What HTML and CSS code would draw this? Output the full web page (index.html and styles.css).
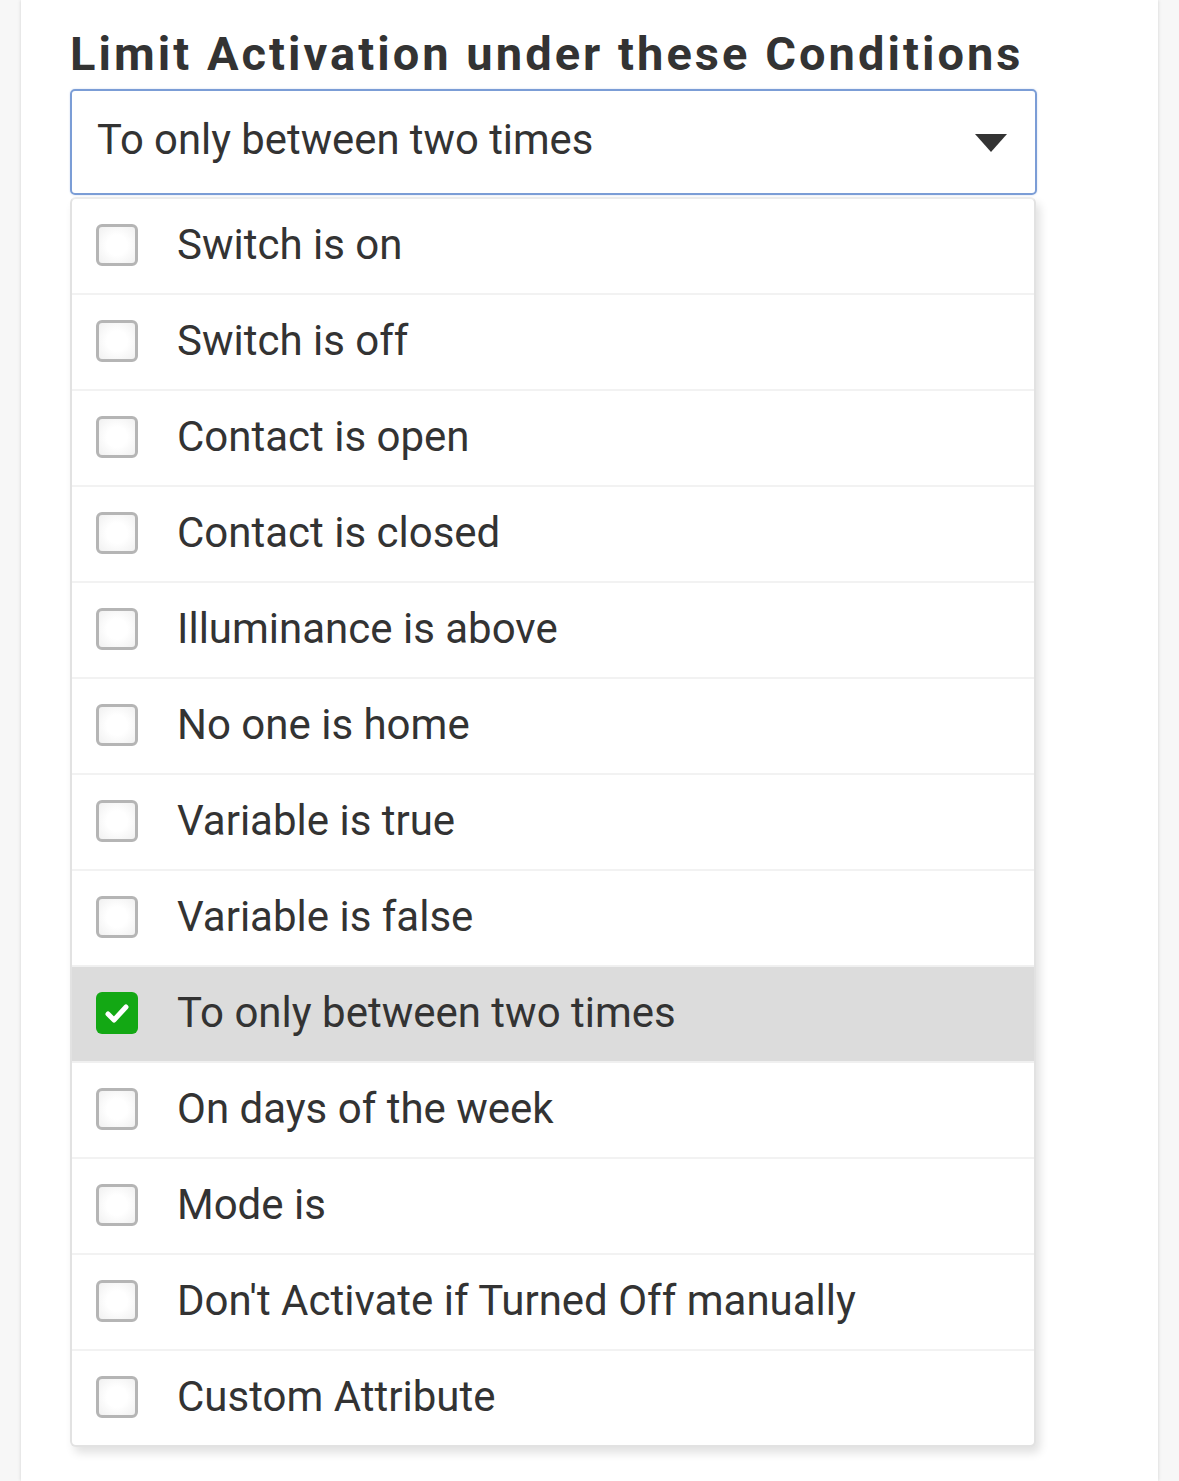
FILE: index.html
```html
<!DOCTYPE html>
<html>
<head>
<meta charset="utf-8">
<link rel="stylesheet" href="styles.css">
</head>
<body>
<div class="page">
  <div class="card">
    <h2 class="title">Limit Activation under these Conditions</h2>
    <div class="select">
      <span class="select-text">To only between two times</span>
      <span class="arrow"></span>
    </div>
    <ul class="menu">
      <li class="item"><span class="box"></span><span class="label">Switch is on</span></li>
      <li class="item"><span class="box"></span><span class="label">Switch is off</span></li>
      <li class="item"><span class="box"></span><span class="label">Contact is open</span></li>
      <li class="item"><span class="box"></span><span class="label">Contact is closed</span></li>
      <li class="item"><span class="box"></span><span class="label">Illuminance is above</span></li>
      <li class="item"><span class="box"></span><span class="label">No one is home</span></li>
      <li class="item"><span class="box"></span><span class="label">Variable is true</span></li>
      <li class="item"><span class="box"></span><span class="label">Variable is false</span></li>
      <li class="item selected"><span class="box checked"><svg viewBox="0 0 42 42" width="42" height="42"><path d="M12 22 L18 28 L30 15" fill="none" stroke="#fff" stroke-width="5" stroke-linecap="round" stroke-linejoin="round"/></svg></span><span class="label">To only between two times</span></li>
      <li class="item"><span class="box"></span><span class="label">On days of the week</span></li>
      <li class="item"><span class="box"></span><span class="label">Mode is</span></li>
      <li class="item"><span class="box"></span><span class="label">Don't Activate if Turned Off manually</span></li>
      <li class="item"><span class="box"></span><span class="label">Custom Attribute</span></li>
    </ul>
  </div>
</div>
</body>
</html>
```
FILE: styles.css
```css
html, body {
  margin: 0;
  padding: 0;
  background: #f7f7f7;
  font-family: Roboto, "Liberation Sans", sans-serif;
  color: #333;
}
.page {
  display: flex;
  min-height: 1481px;
}
.card {
  margin-left: 21px;
  width: 1137px;
  background: #fff;
  box-shadow: -1px 0 3px rgba(0,0,0,0.08), 1px 0 3px rgba(0,0,0,0.08);
  padding: 26px 0 0 49px;
  box-sizing: border-box;
}
.title {
  margin: 0;
  font-size: 47px;
  font-weight: 700;
  letter-spacing: 3.05px;
  line-height: 56px;
  color: #333;
}
.select {
  margin-top: 7px;
  width: 967px;
  height: 106px;
  box-sizing: border-box;
  border: 2px solid #7b9dd6;
  border-radius: 5px;
  display: flex;
  align-items: center;
  padding: 0 28px 0 25px;
  box-shadow: 0 0 2px rgba(123,157,214,0.4);
}
.select-text {
  flex: 1;
  font-size: 41.8px;
  color: #333;
  margin-top: -6px;
}
.arrow {
  width: 0;
  height: 0;
  border-left: 16px solid transparent;
  border-right: 16px solid transparent;
  border-top: 18px solid #333;
  margin-top: 2px;
}
.menu {
  list-style: none;
  margin: 2px 0 0 0;
  padding: 0;
  width: 966px;
  box-sizing: border-box;
  border: 2px solid #e2e2e2;
  border-top-color: #ececec;
  border-radius: 6px;
  background: #fff;
  box-shadow: 4px 6px 10px rgba(0,0,0,0.12);
  overflow: hidden;
}
.item {
  height: 96px;
  box-sizing: border-box;
  display: flex;
  align-items: center;
  padding-left: 24px;
  padding-bottom: 2px;
  border-top: 2px solid #f2f2f2;
}
.item:first-child {
  border-top: none;
  height: 94px;
}
.item.selected {
  background: #dcdcdc;
  border-top-color: #f0f0f0;
}
.item.selected + .item {
  border-top-color: #f0f0f0;
}
.box {
  width: 42px;
  height: 42px;
  box-sizing: border-box;
  border: 3px solid #b5b5b5;
  border-radius: 6px;
  background: radial-gradient(circle, #fff 40%, #f0f0f0 100%);
  flex: none;
  display: flex;
}
.box.checked {
  border: none;
  background: #13a814;
}
.box svg {
  display: block;
}
.label {
  margin-left: 39px;
  font-size: 42px;
  color: #333;
  margin-top: -2px;
}
```
